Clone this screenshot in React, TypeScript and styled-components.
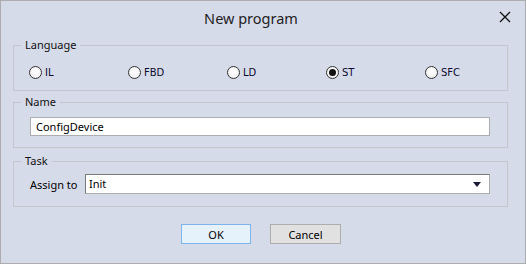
import React from "react";
import styled, { createGlobalStyle } from "styled-components";

const Global = createGlobalStyle`
  html, body { margin: 0; padding: 0; background: #d6dbe9; }
  * { box-sizing: border-box; }
`;

const Dialog = styled.div`
  width: 526px;
  height: 264px;
  border: 1px solid #acacac;
  background: #d6dbe9;
  font-family: "Noto Sans", "Open Sans", sans-serif;
  color: #000;
  display: flex;
  flex-direction: column;
`;

const TitleBar = styled.div`
  height: 32px;
  display: flex;
  align-items: center;
  justify-content: center;
  padding-right: 24px;
  position: relative;
`;

const Title = styled.div`
  font-size: 14.5px;
  color: #1e1e1e;
  margin-top: 1px;
`;

const CloseButton = styled.div`
  position: absolute;
  right: 14px;
  top: 10px;
  width: 12px;
  height: 12px;
  display: flex;
`;

const Body = styled.div`
  padding: 12px 17px 0 12px;
  display: flex;
  flex-direction: column;
`;

const Group = styled.div<{ $mt?: number }>`
  position: relative;
  border: 1px solid #c3c6cc;
  height: 46px;
  margin-top: ${(p) => p.$mt ?? 0}px;
`;

const Legend = styled.span`
  position: absolute;
  left: 7px;
  top: -9px;
  padding: 0 4px;
  background: #d6dbe9;
  font-size: 11px;
  line-height: 16px;
  color: #111;
`;

const RadioRow = styled.div`
  display: grid;
  grid-template-columns: repeat(5, 99px);
  padding: 19px 0 0 15px;
`;

const RadioItem = styled.label`
  display: flex;
  align-items: center;
  gap: 3px;
  height: 14px;
  font-family: "DejaVu Sans", "Liberation Sans", sans-serif;
  font-size: 10px;
  color: #0a0a30;
`;

const RadioCircle = styled.span<{ $checked?: boolean }>`
  width: 13px;
  height: 13px;
  border-radius: 50%;
  border: 1px solid #333;
  background: radial-gradient(circle at 50% 40%, #ffffff 0%, #f4f4f4 60%, #dcdcdc 100%);
  display: flex;
  align-items: center;
  justify-content: center;
  &::after {
    content: "";
    display: ${(p) => (p.$checked ? "block" : "none")};
    width: 7px;
    height: 7px;
    border-radius: 50%;
    background: #111;
  }
`;

const FieldRow = styled.div`
  display: flex;
  align-items: center;
  padding: 0 17px 0 16px;
`;

const TextInput = styled.div`
  flex: 1;
  height: 19px;
  margin-top: 14px;
  background: #fff;
  border: 1px solid #abadb3;
  font-size: 11px;
  line-height: 17px;
  padding-left: 5px;
  color: #000;
`;

const FieldLabel = styled.div`
  width: 55px;
  font-size: 11px;
  color: #000;
`;

const SelectBox = styled.div`
  flex: 1;
  height: 20px;
  background: #fff;
  border: 1px solid #7a7a7a;
  border-right-color: #acacac;
  border-bottom-color: #acacac;
  font-size: 11px;
  line-height: 18px;
  padding: 0 8px 0 3px;
  display: flex;
  justify-content: space-between;
  align-items: center;
`;

const TaskRow = styled(FieldRow)`
  padding-top: 12px;
`;

const ButtonRow = styled.div`
  display: flex;
  justify-content: center;
  gap: 19px;
  padding-left: 1px;
  margin-top: 17px;
`;

const Button = styled.div<{ $primary?: boolean }>`
  width: ${(p) => (p.$primary ? 70 : 71)}px;
  height: 20px;
  border: 1px solid ${(p) => (p.$primary ? "#7eb4ea" : "#adadad")};
  background: ${(p) => (p.$primary ? "#e5f1fb" : "#e1e1e1")};
  font-size: 11px;
  display: flex;
  align-items: center;
  justify-content: center;
  color: #000;
`;

const languages = ["IL", "FBD", "LD", "ST", "SFC"];

export default function App() {
  return (
    <>
      <Global />
      <Dialog>
        <TitleBar>
          <Title>New program</Title>
          <CloseButton>
            <svg width="12" height="12" viewBox="0 0 12 12">
              <path d="M1 1 L11 11 M11 1 L1 11" stroke="#111" strokeWidth="1.3" />
            </svg>
          </CloseButton>
        </TitleBar>
        <Body>
          <Group>
            <Legend>Language</Legend>
            <RadioRow>
              {languages.map((l) => (
                <RadioItem key={l}>
                  <RadioCircle $checked={l === "ST"} />
                  {l}
                </RadioItem>
              ))}
            </RadioRow>
          </Group>
          <Group $mt={11}>
            <Legend>Name</Legend>
            <FieldRow>
              <TextInput>ConfigDevice</TextInput>
            </FieldRow>
          </Group>
          <Group $mt={13}>
            <Legend>Task</Legend>
            <TaskRow>
              <FieldLabel>Assign to</FieldLabel>
              <SelectBox>
                <span>Init</span>
                <svg width="8" height="5" viewBox="0 0 8 5">
                  <path d="M0 0 L8 0 L4 5 Z" fill="#1a1a3a" />
                </svg>
              </SelectBox>
            </TaskRow>
          </Group>
          <ButtonRow>
            <Button $primary>OK</Button>
            <Button>Cancel</Button>
          </ButtonRow>
        </Body>
      </Dialog>
    </>
  );
}
